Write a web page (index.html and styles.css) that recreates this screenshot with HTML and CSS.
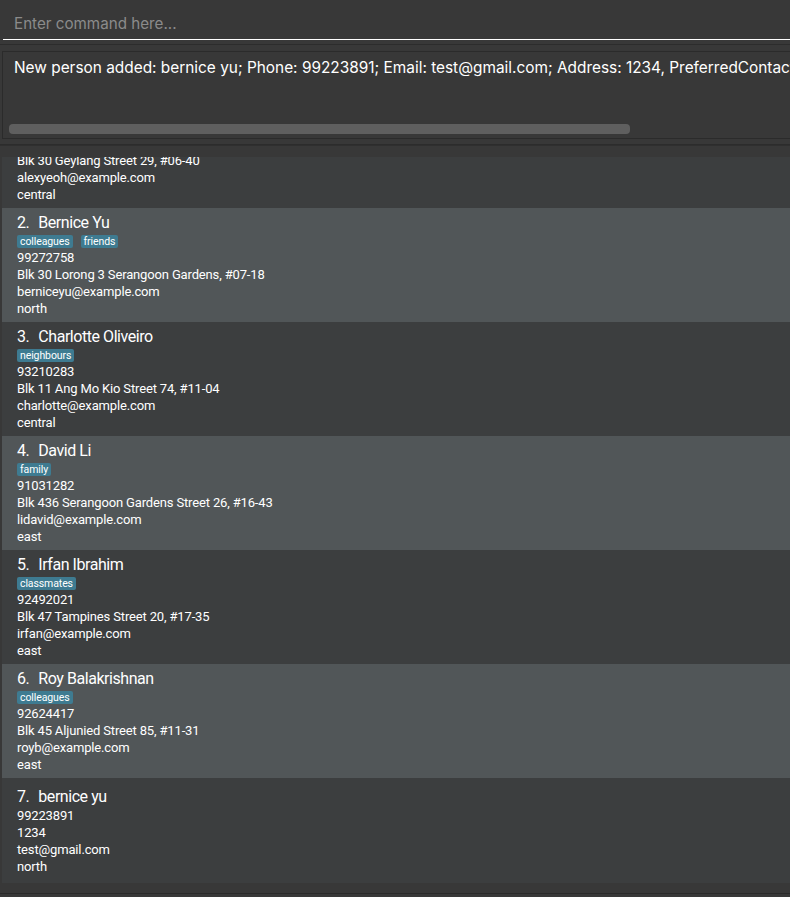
FILE: index.html
```html
<!DOCTYPE html>
<html>
<head>
<meta charset="utf-8">
<link rel="stylesheet" href="styles.css">
</head>
<body>
<div class="app">
  <div class="command-box">
    <input class="command-input" type="text" placeholder="Enter command here...">
  </div>
  <div class="result-pane">
    <div class="result-box">
      <div class="result-text">New person added: bernice yu; Phone: 99223891; Email: test@gmail.com; Address: 1234, PreferredContactRegion: north</div>
      <div class="hscroll"><div class="hthumb"></div></div>
    </div>
  </div>
  <div class="list-pane">
    <div class="list-viewport">
      <div class="list">
        <div class="cell dark">
          <div class="name"><span class="idx">1.</span>Alex Yeoh</div>
          <div class="tags"><span class="tag">friends</span></div>
          <div class="line">87438807</div>
          <div class="line">Blk 30 Geylang Street 29, #06-40</div>
          <div class="line">alexyeoh@example.com</div>
          <div class="line">central</div>
        </div>
        <div class="cell light">
          <div class="name"><span class="idx">2.</span>Bernice Yu</div>
          <div class="tags"><span class="tag">colleagues</span><span class="tag">friends</span></div>
          <div class="line">99272758</div>
          <div class="line">Blk 30 Lorong 3 Serangoon Gardens, #07-18</div>
          <div class="line">berniceyu@example.com</div>
          <div class="line">north</div>
        </div>
        <div class="cell dark">
          <div class="name"><span class="idx">3.</span>Charlotte Oliveiro</div>
          <div class="tags"><span class="tag">neighbours</span></div>
          <div class="line">93210283</div>
          <div class="line">Blk 11 Ang Mo Kio Street 74, #11-04</div>
          <div class="line">charlotte@example.com</div>
          <div class="line">central</div>
        </div>
        <div class="cell light">
          <div class="name"><span class="idx">4.</span>David Li</div>
          <div class="tags"><span class="tag">family</span></div>
          <div class="line">91031282</div>
          <div class="line">Blk 436 Serangoon Gardens Street 26, #16-43</div>
          <div class="line">lidavid@example.com</div>
          <div class="line">east</div>
        </div>
        <div class="cell dark">
          <div class="name"><span class="idx">5.</span>Irfan Ibrahim</div>
          <div class="tags"><span class="tag">classmates</span></div>
          <div class="line">92492021</div>
          <div class="line">Blk 47 Tampines Street 20, #17-35</div>
          <div class="line">irfan@example.com</div>
          <div class="line">east</div>
        </div>
        <div class="cell light">
          <div class="name"><span class="idx">6.</span>Roy Balakrishnan</div>
          <div class="tags"><span class="tag">colleagues</span></div>
          <div class="line">92624417</div>
          <div class="line">Blk 45 Aljunied Street 85, #11-31</div>
          <div class="line">royb@example.com</div>
          <div class="line">east</div>
        </div>
        <div class="cell dark notags">
          <div class="name"><span class="idx">7.</span>bernice yu</div>
          <div class="line">99223891</div>
          <div class="line">1234</div>
          <div class="line">test@gmail.com</div>
          <div class="line">north</div>
        </div>
      </div>
    </div>
  </div>
  <div class="status-bar"></div>
</div>
</body>
</html>
```
FILE: styles.css
```css
html, body {
  margin: 0;
  padding: 0;
  background: #383838;
  width: 790px;
  height: 897px;
  overflow: hidden;
}
.app {
  font-family: Inter, "Open Sans", sans-serif;
  display: flex;
  flex-direction: column;
  width: 790px;
  height: 897px;
}
.command-box {
  height: 45px;
  padding: 0 0 0 3px;
  box-sizing: border-box;
  background: #383838;
  border-bottom: 1px solid #2c2c2c;
}
.command-input {
  display: block;
  width: 787px;
  height: 40px;
  box-sizing: border-box;
  margin: 0;
  padding: 7px 0 0 11px;
  background: transparent;
  border: none;
  border-bottom: 1px solid #ffffff;
  outline: none;
  color: #ffffff;
  font-family: inherit;
  font-size: 15.2px;
}
.command-input::placeholder {
  color: #8b8b8b;
}
.result-pane {
  padding: 6px 0 5px 2px;
  background: #383838;
  border-bottom: 1px solid #2c2c2c;
}
.result-box {
  height: 88px;
  box-sizing: border-box;
  border: 1px solid #2b2b2b;
  border-right: none;
  background: #383838;
  display: flex;
  flex-direction: column;
}
.result-text {
  color: #ffffff;
  font-size: 15.4px;
  white-space: nowrap;
  overflow: hidden;
  padding: 7px 0 0 11px;
  line-height: 18px;
  flex: 1;
}
.hscroll {
  height: 10px;
  padding: 0 0 4px 6px;
}
.hthumb {
  width: 621px;
  height: 10px;
  background: #5f5f5f;
  border-radius: 4px;
}
.list-pane {
  padding: 11px 0 0 2px;
  background: #383838;
  border-top: 1px solid #2f2f2f;
}
.list-viewport {
  height: 726px;
  overflow: hidden;
  background: #3c3e3f;
  font-family: Roboto, "Liberation Sans", sans-serif;
}
.list {
  margin-top: -63px;
}
.cell {
  padding: 5px 0 5px 15px;
  height: 114px;
  box-sizing: border-box;
}
.cell.dark { background: #3c3e3f; }
.cell.light { background: #515658; }
.cell.notags {
  padding-top: 9px;
  height: 104px;
}
.name {
  display: flex;
  color: #ffffff;
  font-size: 16px;
  letter-spacing: -0.45px;
  line-height: 20px;
}
.idx {
  padding-right: 9px;
}
.tags {
  display: flex;
  gap: 8px;
  height: 16px;
  align-items: center;
}
.tag {
  background: #3e7b91;
  color: #ffffff;
  font-size: 10.5px;
  letter-spacing: -0.1px;
  line-height: 13px;
  padding: 0 3px;
  border-radius: 2px;
}
.line {
  color: #ffffff;
  font-size: 13px;
  letter-spacing: -0.15px;
  line-height: 17px;
}
.status-bar {
  flex: 1;
  background: #383838;
  margin-top: 10px;
  border-top: 1px solid #2a2a2a;
}
```
